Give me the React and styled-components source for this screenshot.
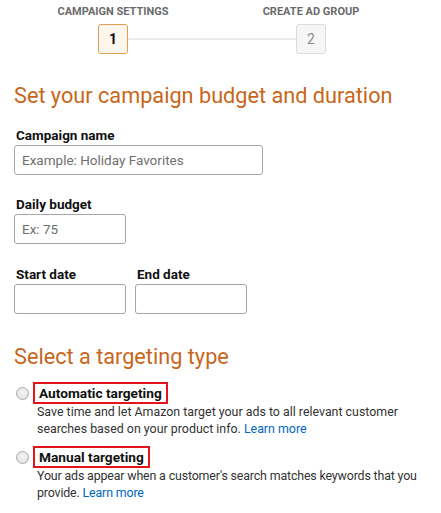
import React from "react";
import styled, { createGlobalStyle } from "styled-components";

const Global = createGlobalStyle`
  html, body { margin: 0; padding: 0; background: #fff; }
  body { font-family: Roboto, "Liberation Sans", Arial, sans-serif; color: #111; }
  * { box-sizing: border-box; }
`;

const Page = styled.div`
  width: 441px;
  padding: 5px 14px 0 14px;
`;

const Stepper = styled.div`
  display: grid;
  grid-template-columns: 30px 168px 30px;
  grid-template-rows: 14px 30px;
  row-gap: 5px;
  margin-left: 84px;
`;

const StepLabel = styled.div`
  grid-row: 1;
  grid-column: ${(p) => p.$col};
  justify-self: center;
  white-space: nowrap;
  font-size: 11px;
  line-height: 14px;
  font-weight: 700;
  color: #6b6b6b;
`;

const StepBox = styled.div`
  grid-row: 2;
  grid-column: ${(p) => p.$col};
  width: 30px;
  height: 30px;
  border-radius: 3px;
  display: flex;
  align-items: center;
  justify-content: center;
  font-size: 14px;
  border: 1px solid ${(p) => (p.$active ? "#e0a050" : "#dcdcdc")};
  background: ${(p) => (p.$active ? "#fdf6ec" : "#f6f6f6")};
  color: ${(p) => (p.$active ? "#111122" : "#8a8a8a")};
  font-weight: ${(p) => (p.$active ? 700 : 400)};
`;

const Connector = styled.div`
  grid-row: 2;
  grid-column: 2;
  align-self: center;
  height: 2px;
  background: #ececec;
`;

const Heading = styled.h2`
  margin: ${(p) => p.$mt}px 0 0 0;
  font-size: 21.7px;
  line-height: 28px;
  font-weight: 400;
  color: #c7661b;
`;

const Field = styled.div`
  display: flex;
  flex-direction: column;
  gap: 2px;
  margin-top: ${(p) => p.$mt}px;
`;

const Row = styled.div`
  display: flex;
  gap: 9px;
  margin-top: ${(p) => p.$mt}px;
`;

const Label = styled.label`
  padding-left: 2px;
  font-size: 13.5px;
  line-height: 16px;
  font-weight: 700;
  color: #111;
`;

const Input = styled.input`
  width: ${(p) => p.$w}px;
  height: 30px;
  border: 1px solid #a6a6a6;
  border-radius: 3px;
  padding: 0 7px;
  font-family: inherit;
  font-size: 13.5px;
  color: #111;
  background: #fff;
  &::placeholder { color: #6f6f6f; }
`;

const Options = styled.div`
  display: flex;
  flex-direction: column;
  gap: 9px;
  margin-top: 11px;
  padding-left: 2px;
`;

const Option = styled.div`
  display: flex;
  flex-direction: column;
`;

const OptionHead = styled.div`
  display: flex;
  align-items: center;
  gap: 4px;
`;

const Radio = styled.span`
  width: 13px;
  height: 13px;
  border-radius: 50%;
  border: 1px solid #a9a9a9;
  background: radial-gradient(circle at 50% 35%, #f4f4f4 0%, #dedede 100%);
  flex: none;
`;

const OptionTitle = styled.span`
  display: inline-block;
  border: 2px solid #e3141b;
  padding: 1px 4px;
  font-size: 13.7px;
  line-height: 16px;
  font-weight: 700;
  color: #111;
`;

const Desc = styled.p`
  margin: -1px 0 0 21px;
  font-size: 12.4px;
  line-height: 17px;
  color: #333;
  white-space: nowrap;
  letter-spacing: ${(p) => p.$ls || 0}px;
`;

const Link = styled.a`
  color: #0066c0;
  text-decoration: none;
`;

export default function App() {
  return (
    <>
      <Global />
      <Page>
        <Stepper>
          <StepLabel $col={1}>CAMPAIGN SETTINGS</StepLabel>
          <StepLabel $col={3}>CREATE AD GROUP</StepLabel>
          <StepBox $col={1} $active>1</StepBox>
          <Connector />
          <StepBox $col={3}>2</StepBox>
        </Stepper>

        <Heading $mt={28}>Set your campaign budget and duration</Heading>

        <Field $mt={17}>
          <Label>Campaign name</Label>
          <Input $w={249} placeholder="Example: Holiday Favorites" />
        </Field>

        <Field $mt={21}>
          <Label>Daily budget</Label>
          <Input $w={112} placeholder="Ex: 75" />
        </Field>

        <Row $mt={22}>
          <Field $mt={0}>
            <Label>Start date</Label>
            <Input $w={112} />
          </Field>
          <Field $mt={0}>
            <Label>End date</Label>
            <Input $w={112} />
          </Field>
        </Row>

        <Heading $mt={29}>Select a targeting type</Heading>

        <Options>
          <Option>
            <OptionHead>
              <Radio />
              <OptionTitle>Automatic targeting</OptionTitle>
            </OptionHead>
            <Desc $ls={0}>
              Save time and let Amazon target your ads to all relevant customer
              <br />
              searches based on your product info. <Link href="#">Learn more</Link>
            </Desc>
          </Option>
          <Option>
            <OptionHead>
              <Radio />
              <OptionTitle>Manual targeting</OptionTitle>
            </OptionHead>
            <Desc $ls={-0.15}>
              Your ads appear when a customer's search matches keywords that you
              <br />
              provide. <Link href="#">Learn more</Link>
            </Desc>
          </Option>
        </Options>
      </Page>
    </>
  );
}
